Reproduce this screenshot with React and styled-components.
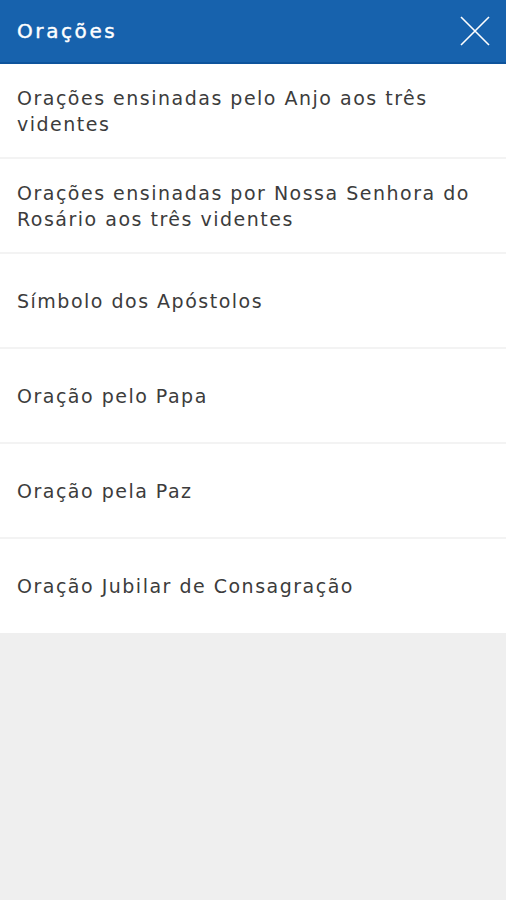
import React from "react";
import styled, { createGlobalStyle } from "styled-components";

const Global = createGlobalStyle`
  html, body { margin: 0; padding: 0; background: #efefef; }
  body { font-family: "DejaVu Sans", "Open Sans", sans-serif; }
`;

const Page = styled.div`
  width: 506px;
  min-height: 900px;
  background: #efefef;
  display: flex;
  flex-direction: column;
`;

const Header = styled.header`
  height: 62px;
  background: #1762ad;
  border-bottom: 2px solid #0e549c;
  display: flex;
  align-items: center;
  justify-content: space-between;
  padding: 0 16px 0 17px;
`;

const Title = styled.h1`
  margin: 0;
  font-size: 20px;
  font-weight: 400;
  color: #ffffff;
  letter-spacing: 2.6px;
  -webkit-text-stroke: 0.4px #ffffff;
`;

const CloseButton = styled.button`
  background: none;
  border: none;
  padding: 0;
  width: 30px;
  height: 30px;
  display: flex;
  align-items: center;
  justify-content: center;
`;

const List = styled.ul`
  list-style: none;
  margin: 0;
  padding: 0;
  background: #ffffff;
`;

const Item = styled.li`
  height: 93px;
  display: flex;
  align-items: center;
  padding: 0 24px 0 17px;
  font-size: 19px;
  line-height: 26px;
  color: #3c3c3c;
  letter-spacing: 1.5px;
  border-bottom: 2px solid #f3f3f3;
  &:last-child { border-bottom: none; height: 94px; }
`;

const items = [
  "Orações ensinadas pelo Anjo aos três videntes",
  "Orações ensinadas por Nossa Senhora do Rosário aos três videntes",
  "Símbolo dos Apóstolos",
  "Oração pelo Papa",
  "Oração pela Paz",
  "Oração Jubilar de Consagração",
];

export default function App() {
  return (
    <Page>
      <Global />
      <Header>
        <Title>Orações</Title>
        <CloseButton aria-label="Fechar">
          <svg width="30" height="30" viewBox="0 0 30 30">
            <path d="M1 1 L29 29 M29 1 L1 29" stroke="#ffffff" strokeWidth="1.6" fill="none" />
          </svg>
        </CloseButton>
      </Header>
      <List>
        {items.map((t) => (
          <Item key={t}>{t}</Item>
        ))}
      </List>
    </Page>
  );
}
